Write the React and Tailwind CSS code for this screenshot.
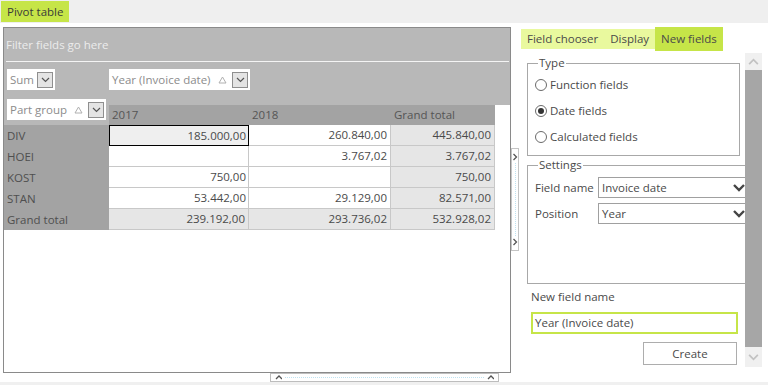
import React from 'react';

function DropBtn() {
  return (
    <span className="w-[16px] h-[16px] border border-[#8f8f8f] bg-[#e4e4e4] flex items-center justify-center shrink-0">
      <svg width="9" height="6" viewBox="0 0 9 6">
        <path d="M1 1l3.5 3.5L8 1" fill="none" stroke="#555" strokeWidth="1.2" />
      </svg>
    </span>
  );
}

function SortMark() {
  return (
    <svg width="9" height="8" viewBox="0 0 9 8" className="shrink-0">
      <path d="M4.5 1L8 7H1z" fill="none" stroke="#b0b0b0" strokeWidth="1" />
    </svg>
  );
}

function Chevron({ up, color = '#444', w = 12, h = 8, sw = 2.4 }) {
  return (
    <svg width={w} height={h} viewBox="0 0 12 8">
      <path d={up ? 'M1 7l5-5 5 5' : 'M1 1l5 5 5-5'} fill="none" stroke={color} strokeWidth={sw} />
    </svg>
  );
}

function Arrow({ dir }) {
  const d = dir === 'right' ? 'M1.5 1l3 3-3 3' : 'M1 5l3-3 3 3';
  return (
    <svg width="7" height="8" viewBox="0 0 7 8" className="shrink-0">
      <path d={d} fill="none" stroke="#555" strokeWidth="1.3" />
    </svg>
  );
}

const rows = [
  { name: 'DIV', a: '185.000,00', b: '260.840,00', t: '445.840,00', sel: true },
  { name: 'HOEI', a: '', b: '3.767,02', t: '3.767,02' },
  { name: 'KOST', a: '750,00', b: '', t: '750,00' },
  { name: 'STAN', a: '53.442,00', b: '29.129,00', t: '82.571,00' },
];

function Radio({ label, checked }) {
  return (
    <div className="h-[26px] flex items-center pl-[7px] gap-[3px]">
      <span className="w-[12px] h-[12px] rounded-full border border-[#6a6a6a] bg-white flex items-center justify-center">
        {checked && <span className="w-[6px] h-[6px] rounded-full bg-[#333]" />}
      </span>
      <span>{label}</span>
    </div>
  );
}

function SelectRow({ label, value, mt }) {
  return (
    <div className={`flex items-center pl-[7px] ${mt}`}>
      <span className="w-[63px]">{label}</span>
      <div className="w-[154px] h-[21px] border border-[#a0a0a0] flex items-center justify-between pl-[3px] pr-[6px] shrink-0">
        <span>{value}</span>
        <Chevron color="#444" />
      </div>
    </div>
  );
}

export default function App() {
  return (
    <div className="w-[768px] h-[385px] bg-white overflow-hidden flex flex-col font-['Open_Sans','Noto_Sans',sans-serif] text-[11.5px] leading-[16px] text-[#4a4a4a]">
      {/* top bar */}
      <div className="h-[23px] bg-[#efefef] pt-[1px] pl-[1px] shrink-0">
        <div className="w-[68px] h-[21px] bg-[#c6e548] flex items-center pl-[6px] text-[#3a3a3a]">Pivot table</div>
      </div>

      <div className="flex h-[359px] shrink-0">
        {/* left: pivot */}
        <div className="w-[519px] flex flex-col pl-[3px] pt-[4px] shrink-0">
          <div className="flex">
            <div className="w-[508px] h-[346px] border border-[#8a8a8a] flex flex-col">
              {/* filter area */}
              <div className="h-[71px] bg-[#b8b8b8] pt-[9px]">
                <div className="pl-[2px] text-[#ececec]">Filter fields go here</div>
                <div className="mt-[8px] h-px bg-[#f4f4f4] ml-[2px] mr-[1px]" />
                <div className="mt-[7px] flex">
                  <div className="ml-[3px] w-[48px] h-[21px] bg-white flex items-center justify-between pl-[3px] pr-[2px] text-[#8c8c8c]">
                    <span>Sum</span>
                    <DropBtn />
                  </div>
                  <div className="ml-[54px] w-[141px] h-[21px] bg-white flex items-center pl-[3px] pr-[2px] text-[#8c8c8c]">
                    <span className="flex-1">Year (Invoice date)</span>
                    <span className="mr-[5px]"><SortMark /></span>
                    <DropBtn />
                  </div>
                </div>
              </div>

              {/* header row */}
              <div className="flex h-[26px]">
                <div className="w-[105px] bg-[#b8b8b8] pl-[3px]">
                  <div className="w-[99px] h-[21px] bg-white flex items-center pl-[3px] pr-[2px] text-[#8c8c8c]">
                    <span className="flex-1">Part group</span>
                    <span className="mr-[5px]"><SortMark /></span>
                    <DropBtn />
                  </div>
                </div>
                <div className="flex-1 flex flex-col">
                  <div className="h-[6px] bg-[#b8b8b8]" />
                  <div className="h-[20px] flex">
                    <div className="w-[140px] bg-[#a3a3a3] pl-[3px] flex items-center text-[#555]">2017</div>
                    <div className="w-[142px] bg-[#a3a3a3] pl-[3px] flex items-center text-[#555]">2018</div>
                    <div className="w-[104px] bg-[#a3a3a3] pl-[3px] flex items-center text-[#555]">Grand total</div>
                  </div>
                </div>
              </div>

              {/* body rows */}
              {rows.map((r) => (
                <div key={r.name} className="flex h-[21px]">
                  <div className="w-[105px] bg-[#a3a3a3] pl-[3px] flex items-center text-[#4f4f4f]">{r.name}</div>
                  <div className={`w-[140px] flex items-center justify-end pr-[2px] ${r.sel ? 'border border-black bg-[#efefef]' : 'border-r border-b border-[#c8c8c8]'}`}>{r.a}</div>
                  <div className="w-[142px] border-r border-b border-[#c8c8c8] flex items-center justify-end pr-[3px]">{r.b}</div>
                  <div className="w-[104px] bg-[#e6e6e6] border-r border-b border-[#c8c8c8] flex items-center justify-end pr-[3px]">{r.t}</div>
                </div>
              ))}
              <div className="flex h-[21px]">
                <div className="w-[105px] bg-[#a3a3a3] pl-[3px] flex items-center text-[#4f4f4f]">Grand total</div>
                <div className="w-[140px] bg-[#e6e6e6] border-r border-b border-[#c8c8c8] flex items-center justify-end pr-[3px]">239.192,00</div>
                <div className="w-[142px] bg-[#e6e6e6] border-r border-b border-[#c8c8c8] flex items-center justify-end pr-[3px]">293.736,02</div>
                <div className="w-[104px] bg-[#e6e6e6] border-r border-b border-[#c8c8c8] flex items-center justify-end pr-[3px]">532.928,02</div>
              </div>
            </div>

            {/* vertical splitter */}
            <div className="mt-[121px] w-[8px] h-[103px] border border-[#c4c4c4] bg-white flex flex-col items-center py-[4px]">
              <Arrow dir="right" />
              <div className="flex-1 my-[2px] border-l border-dotted border-[#bfe3f2]" />
              <Arrow dir="right" />
            </div>
          </div>

          {/* bottom splitter */}
          <div className="ml-[267px] w-[229px] h-[9px] border border-[#bdbdbd] bg-white flex items-center px-[4px]">
            <Arrow dir="up" />
            <div className="flex-1 mx-[3px] border-t border-dotted border-[#bfe3f2]" />
            <Arrow dir="up" />
          </div>
        </div>

        {/* right panel */}
        <div className="w-[249px] flex flex-col shrink-0">
          <div className="mt-[4px] ml-[2px] h-[24px] flex items-center">
            <div className="h-[20px] bg-[#e9f99e] flex items-center">
              <span className="px-[6px]">Field chooser</span>
              <span className="px-[6px]">Display</span>
            </div>
            <div className="h-[24px] bg-[#c6e548] flex items-center px-[6px]">New fields</div>
          </div>

          <div className="mt-[2px] flex">
            <div className="w-[226px] h-[329px] overflow-hidden shrink-0">
              <fieldset className="mt-[2px] ml-[8px] w-[213px] h-[101px] border border-[#a8a8a8] pt-[1px]">
                <legend className="ml-[10px] px-[1px]">Type</legend>
                <Radio label="Function fields" />
                <Radio label="Date fields" checked />
                <Radio label="Calculated fields" />
              </fieldset>

              <fieldset className="mt-[1px] ml-[8px] w-[240px] h-[127px] border border-[#a8a8a8]">
                <legend className="ml-[10px] px-[1px]">Settings</legend>
                <SelectRow label="Field name" value="Invoice date" mt="mt-[4px]" />
                <SelectRow label="Position" value="Year" mt="mt-[5px]" />
              </fieldset>

              <div className="mt-[5px] ml-[12px]">New field name</div>
              <div className="mt-[7px] ml-[12px] w-[207px] h-[22px] border-2 border-[#c6e548] flex items-center pl-[2px]">Year (Invoice date)</div>
              <div className="mt-[8px] ml-[124px] w-[94px] h-[23px] border border-[#adadad] bg-white flex items-center justify-center">Create</div>
            </div>

            {/* scrollbar */}
            <div className="w-[17px] h-[314px] flex flex-col shrink-0">
              <div className="h-[17px] bg-[#f0f0f0] flex items-center justify-center">
                <Chevron up color="#c2c2c2" w={11} h={7} sw={2} />
              </div>
              <div className="h-[277px] bg-[#a6a6a6]" />
              <div className="h-[20px] bg-[#f0f0f0] flex items-center justify-center">
                <Chevron color="#c2c2c2" w={11} h={7} sw={2} />
              </div>
            </div>
          </div>
        </div>
      </div>

      <div className="flex-1 bg-[#f0f0f0]" />
    </div>
  );
}
